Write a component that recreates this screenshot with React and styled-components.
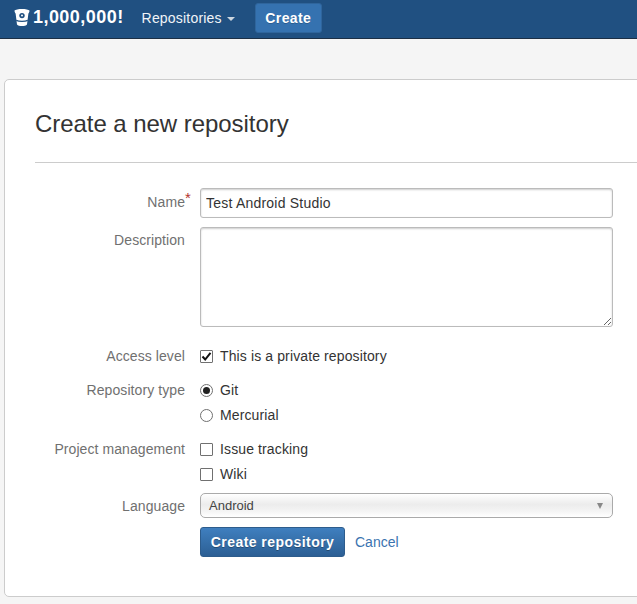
import React from 'react';
import styled, { createGlobalStyle } from 'styled-components';

const GlobalStyle = createGlobalStyle`
  html, body {
    background: #f5f5f5;
    color: #333;
    font-family: "Liberation Sans", Arial, sans-serif;
    font-size: 14px;
    height: 604px;
    margin: 0;
    overflow: hidden;
  }
`;

const Navbar = styled.header`
  align-items: center;
  background: #205081;
  border-bottom: 1px solid #1c2f45;
  box-sizing: border-box;
  color: white;
  display: flex;
  height: 39px;
  padding: 0 0 3px 14px;
`;

const Brand = styled.a`
  align-items: center;
  color: white;
  display: flex;
  font-size: 18px;
  font-weight: 700;
  gap: 3px;
  letter-spacing: 0.45px;
`;

const NavLink = styled.a`
  align-items: center;
  color: #f0f4f8;
  display: flex;
  font-size: 14px;
  gap: 5px;
  letter-spacing: 0.2px;
  margin-left: 18px;
`;

const Caret = styled.span`
  border-left: 4px solid transparent;
  border-right: 4px solid transparent;
  border-top: 4px solid #ccd6e0;
  height: 0;
  margin-top: 2px;
  width: 0;
`;

const NavButton = styled.button`
  background: #3572b0;
  border: 1px solid #2f659c;
  border-radius: 3px;
  color: white;
  font-family: inherit;
  font-size: 14px;
  font-weight: 700;
  height: 30px;
  letter-spacing: 0.4px;
  margin-left: 20px;
  padding: 0;
  text-shadow: 0 1px 0 rgba(0, 0, 0, 0.2);
  width: 67px;
`;

const Card = styled.main`
  background: white;
  border: 1px solid #ccc;
  border-radius: 5px;
  box-sizing: border-box;
  height: 518px;
  margin: 40px -30px 0 4px;
  padding: 29px 0 0 30px;
`;

const Title = styled.h1`
  color: #333;
  font-size: 24px;
  font-weight: 400;
  letter-spacing: -0.05px;
  line-height: 30px;
  margin: 0;
`;

const Divider = styled.hr`
  border: 0;
  border-top: 1px solid #ccc;
  margin: 23px 0 25px;
`;

const Form = styled.form`
  display: flex;
  flex-direction: column;
  width: 578px;
`;

const Row = styled.div`
  display: grid;
  grid-template-columns: 150px 413px;
  column-gap: 15px;
  margin-bottom: ${({ $gap }) => $gap}px;
`;

const Label = styled.div`
  color: #707070;
  letter-spacing: 0.08px;
  line-height: 20px;
  padding-top: ${({ $top }) => $top || 0}px;
  position: relative;
  text-align: right;
`;

const Required = styled.span`
  color: #b5332e;
  font-size: 15px;
  left: 150px;
  line-height: 16px;
  position: absolute;
  top: 2px;
`;

const TextInput = styled.input`
  border: 1px solid #bbb;
  border-radius: 3px;
  box-shadow: inset 0 1px 2px rgba(0, 0, 0, 0.2);
  box-sizing: border-box;
  color: #333;
  font-family: inherit;
  font-size: 14px;
  height: 30px;
  letter-spacing: 0.22px;
  padding: 0 5px;
  width: 100%;
`;

const TextArea = styled.textarea`
  border: 1px solid #bbb;
  border-radius: 3px;
  box-shadow: inset 0 1px 2px rgba(0, 0, 0, 0.2);
  box-sizing: border-box;
  display: block;
  height: 100px;
  width: 100%;
`;

const Options = styled.div`
  display: flex;
  flex-direction: column;
  gap: 5px;
`;

const Option = styled.label`
  align-items: center;
  color: #333;
  display: flex;
  gap: 7px;
  letter-spacing: 0.12px;
  line-height: 20px;
`;

const Box = styled.span`
  align-items: center;
  background: white;
  border: 1px solid #707070;
  border-radius: ${({ $round }) => ($round ? '50%' : '1px')};
  box-sizing: border-box;
  display: flex;
  height: 13px;
  justify-content: center;
  width: 13px;
`;

const Dot = styled.span`
  background: #222;
  border-radius: 50%;
  height: 7px;
  width: 7px;
`;

const SelectBox = styled.div`
  align-items: center;
  background: linear-gradient(#ffffff 0%, #ececec 45%, #f4f4f4 75%, #ffffff 100%);
  border: 1px solid #aaa;
  border-radius: 5px;
  box-sizing: border-box;
  color: #444;
  display: flex;
  font-size: 13px;
  height: 25px;
  justify-content: space-between;
  padding: 0 9px 0 8px;
`;

const SelectArrow = styled.span`
  border-left: 3.5px solid transparent;
  border-right: 3.5px solid transparent;
  border-top: 6px solid #888;
  height: 0;
  width: 0;
`;

const Actions = styled.div`
  align-items: center;
  display: flex;
  gap: 10px;
  margin-left: 165px;
`;

const SubmitButton = styled.button`
  background: linear-gradient(#3f7fbf, #2c5f94);
  border: 1px solid #2d5c8c;
  border-radius: 3px;
  color: white;
  font-family: inherit;
  font-size: 14px;
  font-weight: 700;
  height: 30px;
  letter-spacing: 0.45px;
  padding: 0;
  text-shadow: 0 1px 0 rgba(0, 0, 0, 0.3);
  width: 145px;
`;

const CancelLink = styled.a`
  color: #3b73af;
`;

const CheckMark = () => (
  <svg width="11" height="11" viewBox="0 0 11 11">
    <path d="M1.5 5.5 L4.2 8.5 L9.5 1.8" fill="none" stroke="#111" strokeWidth="2" />
  </svg>
);

const BucketIcon = () => (
  <svg width="16" height="19" viewBox="0 0 16 19">
    <path d="M0.5 2.6 C2 0.3 14 0.3 15.5 2.6 C15.5 4 14.9 5 14.4 5.6 L13 16.5 C11.5 18.6 4.5 18.6 3 16.5 L1.6 5.6 C1.1 5 0.5 4 0.5 2.6 Z" fill="white" />
    <path d="M2.2 12.4 C5 13.8 11 13.8 13.8 12.4" fill="none" stroke="#205081" strokeWidth="1.2" />
    <circle cx="8" cy="7.6" r="2.7" fill="#205081" />
    <circle cx="8" cy="7.6" r="1" fill="white" />
  </svg>
);

const App = () => (
  <>
    <GlobalStyle />
    <Navbar>
      <Brand>
        <BucketIcon />
        1,000,000!
      </Brand>
      <NavLink>
        Repositories
        <Caret />
      </NavLink>
      <NavButton type="button">Create</NavButton>
    </Navbar>
    <Card>
      <Title>Create a new repository</Title>
      <Divider />
      <Form>
        <Row $gap={9}>
          <Label $top={4}>
            Name
            <Required>*</Required>
          </Label>
          <TextInput readOnly value="Test Android Studio" />
        </Row>
        <Row $gap={19}>
          <Label $top={3}>Description</Label>
          <TextArea readOnly />
        </Row>
        <Row $gap={14}>
          <Label>Access level</Label>
          <Options>
            <Option>
              <Box><CheckMark /></Box>
              This is a private repository
            </Option>
          </Options>
        </Row>
        <Row $gap={14}>
          <Label>Repository type</Label>
          <Options>
            <Option>
              <Box $round><Dot /></Box>
              Git
            </Option>
            <Option>
              <Box $round />
              Mercurial
            </Option>
          </Options>
        </Row>
        <Row $gap={9}>
          <Label>Project management</Label>
          <Options>
            <Option>
              <Box />
              Issue tracking
            </Option>
            <Option>
              <Box />
              Wiki
            </Option>
          </Options>
        </Row>
        <Row $gap={9}>
          <Label $top={3}>Language</Label>
          <SelectBox>
            Android
            <SelectArrow />
          </SelectBox>
        </Row>
        <Actions>
          <SubmitButton type="button">Create repository</SubmitButton>
          <CancelLink>Cancel</CancelLink>
        </Actions>
      </Form>
    </Card>
  </>
);

export default App;
